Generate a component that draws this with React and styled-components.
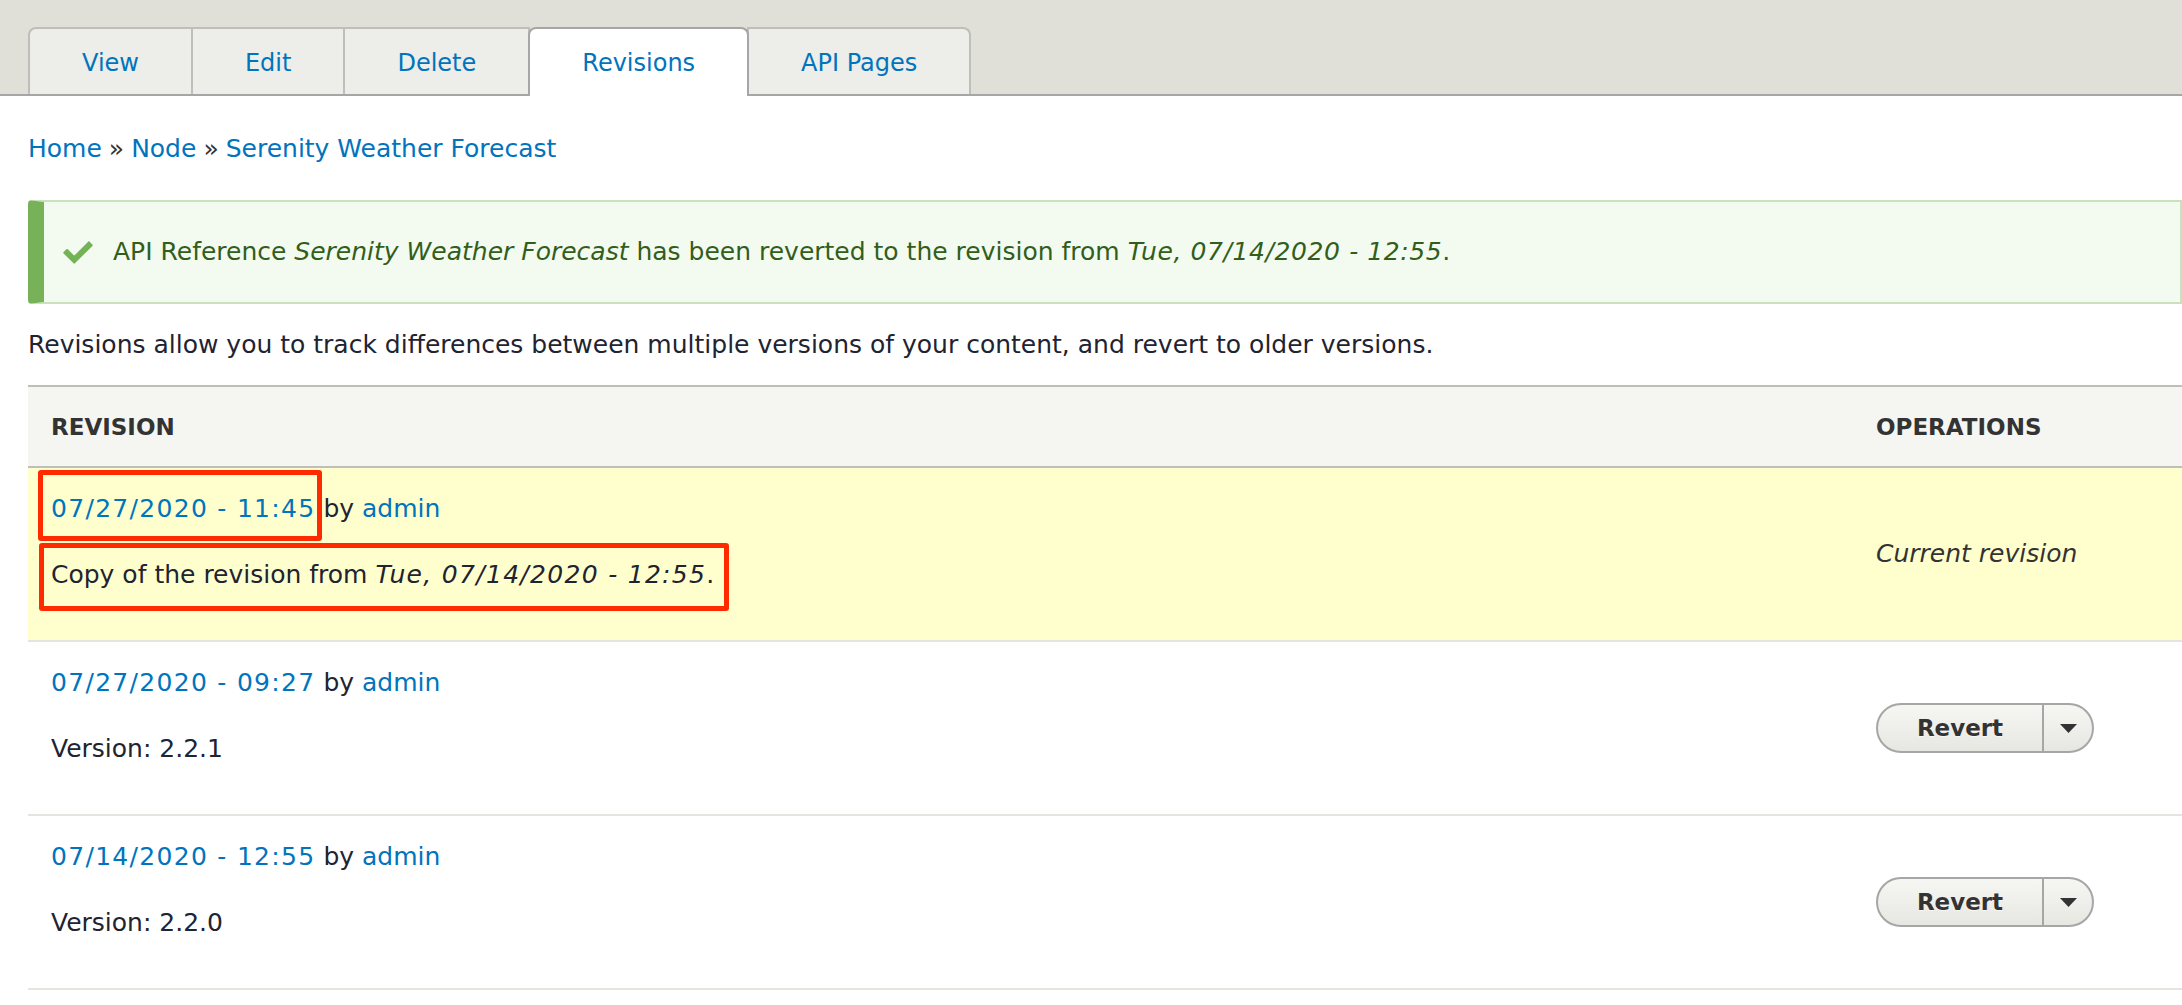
import React from 'react';
import styled, { createGlobalStyle, css } from 'styled-components';

const GlobalStyle = createGlobalStyle`
  html, body {
    margin: 0;
    padding: 0;
    background: #fff;
    overflow: hidden;
  }
  body {
    font-family: "DejaVu Sans", "Liberation Sans", sans-serif;
    font-size: 25px;
    line-height: 40px;
    color: #222330;
  }
  a {
    color: #0074bd;
    text-decoration: none;
  }
`;

const TabBar = styled.div`
  display: flex;
  align-items: flex-end;
  padding: 27px 0 0 28px;
  background: #e0e0d8;
  border-bottom: 2px solid #a6a6a6;
  height: 67px;
`;

const Tab = styled.a`
  display: block;
  padding: 14px 52px 11px;
  margin-left: -2px;
  background: #ededea;
  border: 2px solid #bfbfba;
  border-bottom: 0;
  font-size: 24px;
  color: #0074bd;
  &:first-child {
    margin-left: 0;
    border-top-left-radius: 8px;
  }
  &:last-child {
    border-top-right-radius: 8px;
  }
  ${p => p.$active && css`
    position: relative;
    z-index: 1;
    background: #fff;
    border-color: #a6a6a6;
    border-radius: 8px 8px 0 0;
    margin-bottom: -2px;
    padding-bottom: 13px;
  `}
`;

const Content = styled.div`
  padding-left: 28px;
`;

const Breadcrumb = styled.nav`
  margin-top: 33px;
  color: #333;
`;

const Sep = styled.span`
  margin: 0 7px;
`;

const Message = styled.div`
  display: flex;
  align-items: center;
  margin-top: 31px;
  padding: 30px 0 30px 18px;
  background: #f3faef;
  border: 2px solid #c9e1bd;
  border-left: 16px solid #77b259;
  border-radius: 4px 0 0 4px;
  color: #325e1c;
  white-space: nowrap;
`;

const CheckIcon = styled.svg`
  width: 32px;
  height: 32px;
  flex: none;
  margin-right: 19px;
`;

const Intro = styled.p`
  margin: 21px 0 0;
`;

const DateText = styled.span`
  letter-spacing: ${p => p.$spacing || 1.3}px;
`;

const Table = styled.div`
  margin-top: 20px;
`;

const Row = styled.div`
  display: grid;
  grid-template-columns: 1fr 329px;
  align-items: center;
  background: ${p => p.$current ? '#ffffcd' : '#fff'};
  border-bottom: 2px solid #e6e4df;
`;

const HeadRow = styled(Row)`
  background: #f5f5f2;
  border-top: 2px solid #bfbfba;
  border-bottom: 2px solid #bfbfba;
`;

const HeadCell = styled.div`
  padding: 20px 23px 19px;
  font-size: 23px;
  font-weight: bold;
  text-transform: uppercase;
  color: #333;
`;

const Cell = styled.div`
  padding: 21px 23px 24px;
`;

const OpsCell = styled.div`
  padding: 0 23px;
`;

const Meta = styled.div`
  white-space: nowrap;
`;

const Log = styled.p`
  margin: 26px 0 21px;
  white-space: nowrap;
`;

const Current = styled.em`
  color: #333;
`;

const Marked = styled.span`
  position: relative;
  &::after {
    content: '';
    position: absolute;
    left: ${p => p.$l}px;
    right: ${p => p.$r}px;
    top: ${p => p.$t}px;
    bottom: ${p => p.$b}px;
    border: 5px solid #ff2a00;
    border-radius: 3px;
    pointer-events: none;
  }
`;

const DropButton = styled.div`
  display: inline-flex;
  height: 50px;
  box-sizing: border-box;
  border: 2px solid #a6a6a6;
  border-radius: 25px;
  overflow: hidden;
  background: linear-gradient(to bottom, #f6f6f3, #e7e7e2);
`;

const DropMain = styled.button`
  width: 164px;
  padding: 0;
  border: 0;
  border-right: 2px solid #a6a6a6;
  background: transparent;
  font-family: "DejaVu Sans", sans-serif;
  font-size: 23px;
  font-weight: bold;
  color: #333;
  text-shadow: 0 1px rgba(255, 255, 255, 0.6);
  box-sizing: content-box;
`;

const DropToggle = styled.button`
  display: flex;
  align-items: center;
  justify-content: center;
  width: 48px;
  padding: 0;
  border: 0;
  background: transparent;
`;

const tabs = ['View', 'Edit', 'Delete', 'Revisions', 'API Pages'];

const revisions = [
  { date: '07/27/2020 - 09:27', log: 'Version: 2.2.1' },
  { date: '07/14/2020 - 12:55', log: 'Version: 2.2.0' },
];

function RevertButton() {
  return (
    <DropButton>
      <DropMain>Revert</DropMain>
      <DropToggle>
        <svg width="17" height="9" viewBox="0 0 17 9">
          <path d="M0 0h17L8.5 9z" fill="#333" />
        </svg>
      </DropToggle>
    </DropButton>
  );
}

export default function App() {
  return (
    <>
      <GlobalStyle />
      <TabBar>
        {tabs.map(t => (
          <Tab key={t} href="#" $active={t === 'Revisions'}>{t}</Tab>
        ))}
      </TabBar>
      <Content>
        <Breadcrumb>
          <a href="#">Home</a><Sep>»</Sep><a href="#">Node</a><Sep>»</Sep><a href="#">Serenity Weather Forecast</a>
        </Breadcrumb>
        <Message>
          <CheckIcon viewBox="0 0 16 16">
            <path fill="#73b355" d="M6.464 13.676c-.194.194-.513.194-.707 0l-4.96-4.955c-.194-.193-.194-.511 0-.707l1.405-1.407c.194-.195.512-.195.707 0l2.849 2.848c.194.193.513.193.707 0l6.629-6.626c.195-.194.514-.194.707 0l1.404 1.404c.193.194.193.513 0 .707l-8.741 8.736z" />
          </CheckIcon>
          <span>
            API Reference <em>Serenity Weather Forecast</em> has been reverted to the revision from <em><DateText $spacing={0.6}>Tue, 07/14/2020 - 12:55</DateText></em>.
          </span>
        </Message>
        <Intro>Revisions allow you to track differences between multiple versions of your content, and revert to older versions.</Intro>
        <Table>
          <HeadRow>
            <HeadCell>Revision</HeadCell>
            <HeadCell>Operations</HeadCell>
          </HeadRow>
          <Row $current>
            <Cell>
              <Meta>
                <Marked $l={-13} $r={-7} $t={-24} $b={-18}><a href="#"><DateText>07/27/2020 - 11:45</DateText></a></Marked> by <a href="#">admin</a>
              </Meta>
              <Log>
                <Marked $l={-12} $r={-15} $t={-17} $b={-22}>Copy of the revision from <em><DateText>Tue, 07/14/2020 - 12:55</DateText></em>.</Marked>
              </Log>
            </Cell>
            <OpsCell><Current>Current revision</Current></OpsCell>
          </Row>
          {revisions.map(r => (
            <Row key={r.date}>
              <Cell>
                <Meta><a href="#"><DateText>{r.date}</DateText></a> by <a href="#">admin</a></Meta>
                <Log>{r.log}</Log>
              </Cell>
              <OpsCell><RevertButton /></OpsCell>
            </Row>
          ))}
        </Table>
      </Content>
    </>
  );
}
